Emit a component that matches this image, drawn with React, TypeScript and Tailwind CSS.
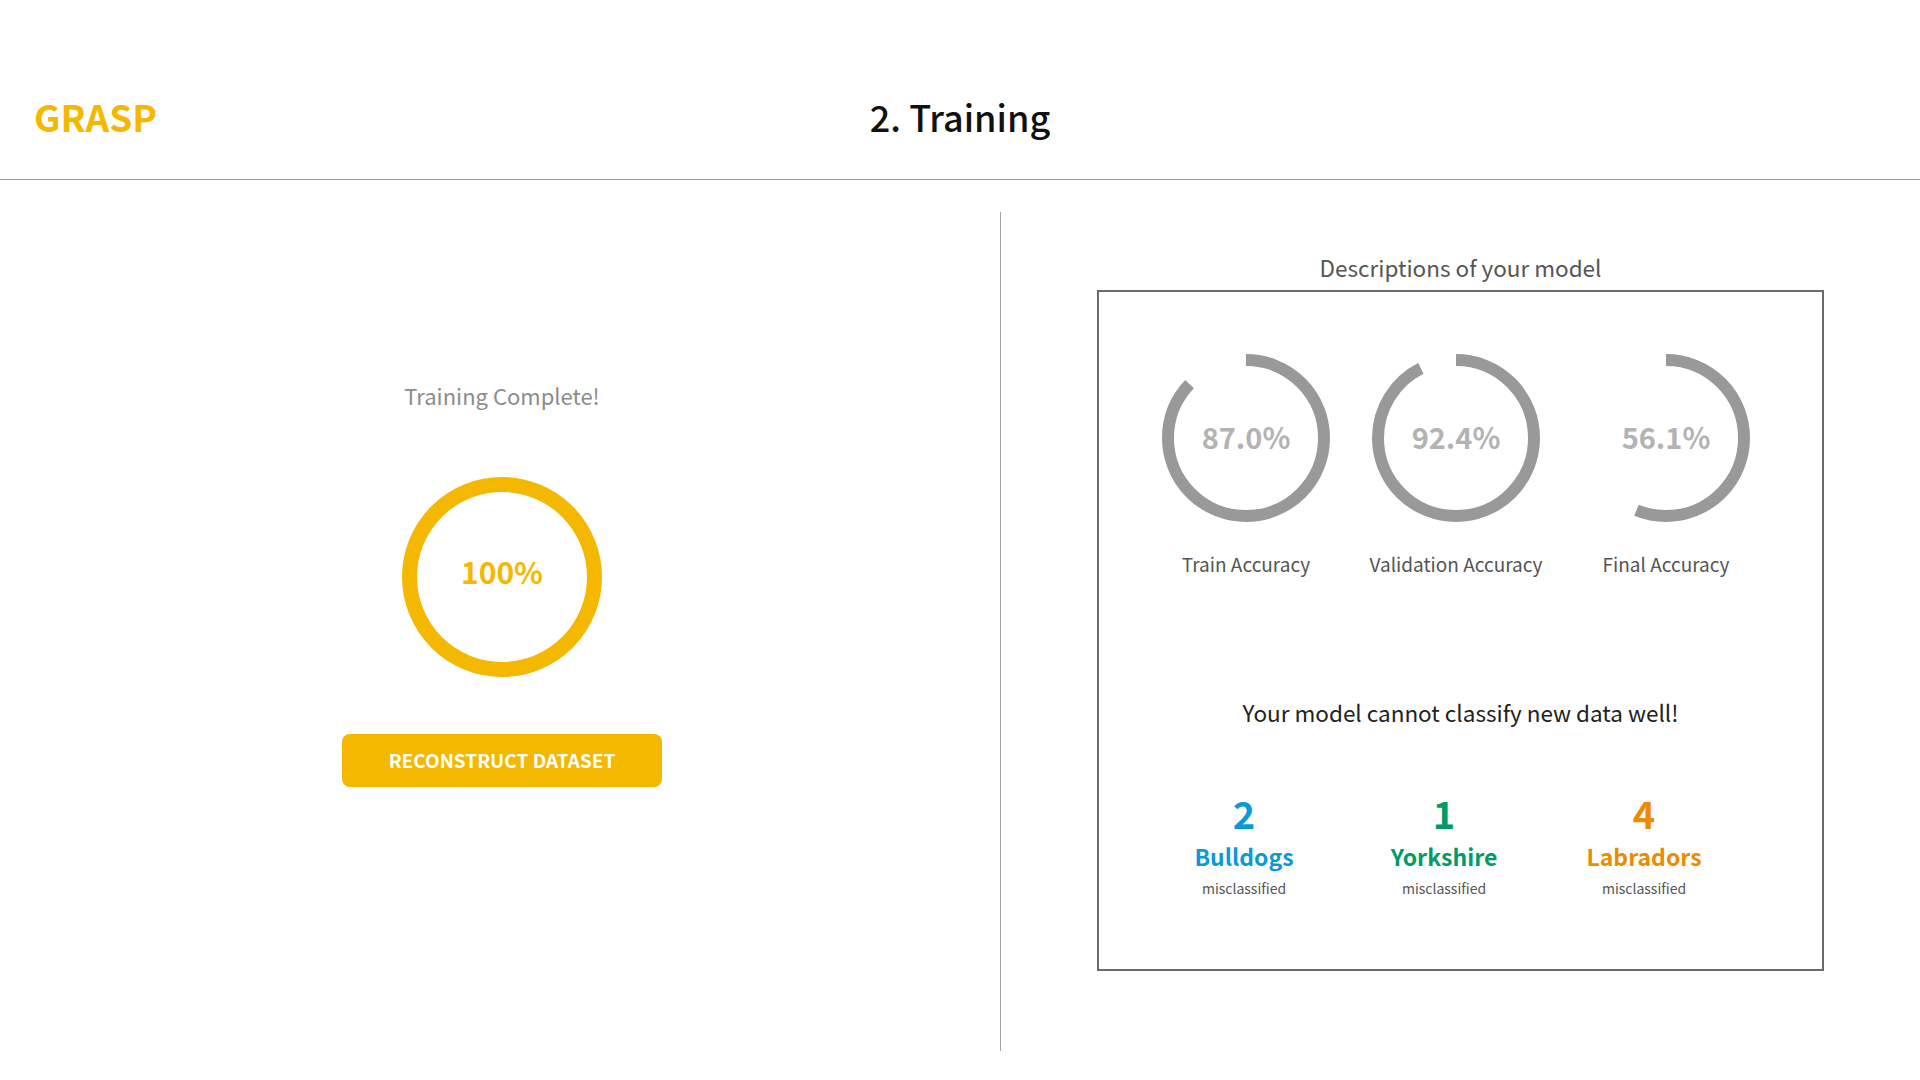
import React from 'react';

type Gauge = { value: number; label: string };

const gauges: Gauge[] = [
  { value: 87.0, label: 'Train Accuracy' },
  { value: 92.4, label: 'Validation Accuracy' },
  { value: 56.1, label: 'Final Accuracy' },
];

const misses = [
  { count: 2, name: 'Bulldogs', color: 'text-[#0a9ad6]' },
  { count: 1, name: 'Yorkshire', color: 'text-[#019a68]' },
  { count: 4, name: 'Labradors', color: 'text-[#ec8a00]' },
];

function Ring({ value }: { value: number }) {
  const r = 78;
  const c = 2 * Math.PI * r;
  return (
    <div className="relative w-[168px] h-[168px]">
      <svg width="168" height="168" viewBox="0 0 168 168" className="-rotate-90">
        <circle
          cx="84"
          cy="84"
          r={r}
          fill="none"
          stroke="#999999"
          strokeWidth="12"
          strokeDasharray={`${(value / 100) * c} ${c}`}
        />
      </svg>
      <div className="absolute inset-0 flex items-center justify-center pb-[2px] text-[29px] font-semibold text-[#b3b3b3]">
        {value.toFixed(1)}%
      </div>
    </div>
  );
}

export default function App() {
  return (
    <div className="w-full h-screen bg-white overflow-hidden font-[family-name:'Noto_Sans_CJK_KR','Noto_Sans',sans-serif]">
      <header className="h-[180px] border-b border-[#9a9a9a] grid grid-cols-[1fr_auto_1fr] items-baseline pt-[92px]">
        <div className="pl-[34px] text-[37px] leading-[48px] font-bold text-[#f5b800]">GRASP</div>
        <h1 className="text-[36px] leading-[48px] font-medium text-[#111]">2. Training</h1>
        <div />
      </header>

      <main className="flex">
        <section className="w-[1000px] flex flex-col items-center pt-[200px] pl-[4px]">
          <p className="text-[22px] leading-[30px] text-[#8c8c8c]">Training Complete!</p>
          <div className="relative mt-[67px] w-[200px] h-[200px]">
            <svg width="200" height="200" viewBox="0 0 200 200">
              <circle cx="100" cy="100" r="92.5" fill="none" stroke="#f4b800" strokeWidth="15" />
            </svg>
            <div className="absolute inset-0 flex items-center justify-center pb-[11px] text-[30px] font-bold text-[#f4b800]">
              100%
            </div>
          </div>
          <button className="mt-[57px] w-[320px] h-[53px] rounded-lg bg-[#f4b800] text-white text-[19px] font-bold">
            RECONSTRUCT DATASET
          </button>
        </section>

        <div className="w-px bg-[#a6a6a6] mt-[32px] h-[839px]" />

        <section className="flex-1 flex flex-col items-center pt-[72px]">
          <h2 className="text-[22.5px] leading-[30px] text-[#555]">Descriptions of your model</h2>
          <div className="mt-[8px] w-[727px] h-[681px] border-2 border-[#6b6b6b]">
            <div className="flex pl-[42px] pt-[62px]">
              {gauges.map((g) => (
                <div key={g.label} className="w-[210px] flex flex-col items-center">
                  <Ring value={g.value} />
                  <span className="mt-[29px] text-[19px] leading-[26px] text-[#555]">{g.label}</span>
                </div>
              ))}
            </div>

            <p className="mt-[119px] text-center text-[22.5px] leading-[32px] text-[#222]">
              Your model cannot classify new data well!
            </p>

            <div className="flex pl-[45px] mt-[65px]">
              {misses.map((m) => (
                <div key={m.name} className={`w-[200px] flex flex-col items-center ${m.color}`}>
                  <span className="text-[38px] leading-[40px] font-bold">{m.count}</span>
                  <span className="mt-[7px] text-[23px] leading-[32px] font-bold">{m.name}</span>
                  <span className="mt-[5px] text-[14px] leading-[22px] text-[#555]">misclassified</span>
                </div>
              ))}
            </div>
          </div>
        </section>
      </main>
    </div>
  );
}
